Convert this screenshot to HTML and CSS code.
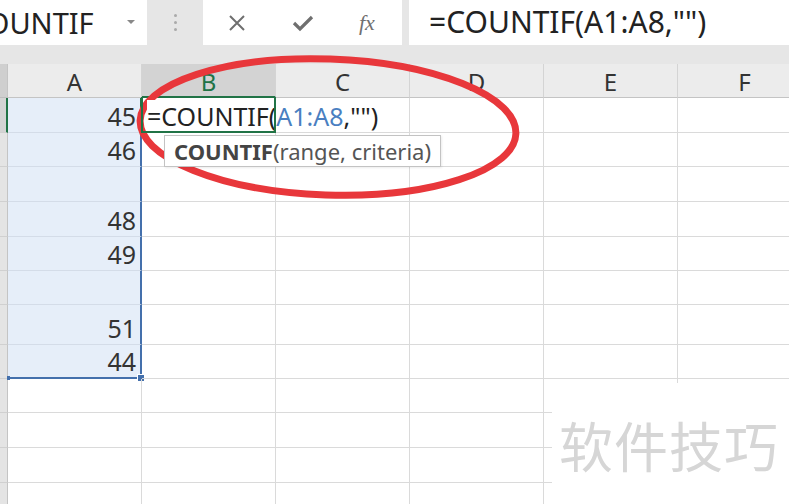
FILE: index.html
```html
<!DOCTYPE html>
<html lang="zh-CN">
<head>
    <meta charset="UTF-8">
    <title>COUNTIF</title>
    <link rel="stylesheet" href="styles.css">
</head>
<body>
    <div class="topbar">
        <div class="namebox">
            <span class="name">COUNTIF</span>
            <span class="caret"></span>
        </div>
        <div class="grip"><i></i><i></i><i></i></div>
        <div class="fx-tools">
            <svg class="ico" width="20" height="20" viewBox="0 0 20 20"><path d="M3 3 L17 17 M17 3 L3 17" stroke="#6f6f6f" stroke-width="2" fill="none"/></svg>
            <svg class="ico" width="22" height="20" viewBox="0 0 22 20"><path d="M2 10 L8 16 L20 4" stroke="#6f6f6f" stroke-width="3.2" fill="none"/></svg>
            <span class="fx">fx</span>
        </div>
        <div class="formula">=COUNTIF(A1:A8,"")</div>
    </div>

    <div class="sheet">
        <div class="row head">
            <div class="rh corner"></div>
            <div class="ch">A</div>
            <div class="ch active">B</div>
            <div class="ch">C</div>
            <div class="ch">D</div>
            <div class="ch">E</div>
            <div class="ch">F</div>
        </div>
        <div class="row h35">
            <div class="rh cur"></div>
            <div class="c sel first">45</div>
            <div class="c edit">
                <span class="edit-text">=COUNTIF(<span class="ref">A1:A8</span>,"")</span>
                <div class="tip"><b>COUNTIF</b>(range, criteria)</div>
            </div>
            <div class="c"></div><div class="c"></div><div class="c"></div><div class="c"></div>
        </div>
        <div class="row h34">
            <div class="rh"></div>
            <div class="c sel">46</div>
            <div class="c"></div><div class="c"></div><div class="c"></div><div class="c"></div><div class="c"></div>
        </div>
        <div class="row h35">
            <div class="rh"></div>
            <div class="c sel"></div>
            <div class="c"></div><div class="c"></div><div class="c"></div><div class="c"></div><div class="c"></div>
        </div>
        <div class="row h35">
            <div class="rh"></div>
            <div class="c sel">48</div>
            <div class="c"></div><div class="c"></div><div class="c"></div><div class="c"></div><div class="c"></div>
        </div>
        <div class="row h34">
            <div class="rh"></div>
            <div class="c sel">49</div>
            <div class="c"></div><div class="c"></div><div class="c"></div><div class="c"></div><div class="c"></div>
        </div>
        <div class="row h34">
            <div class="rh"></div>
            <div class="c sel"></div>
            <div class="c"></div><div class="c"></div><div class="c"></div><div class="c"></div><div class="c"></div>
        </div>
        <div class="row h40">
            <div class="rh"></div>
            <div class="c sel">51</div>
            <div class="c"></div><div class="c"></div><div class="c"></div><div class="c"></div><div class="c"></div>
        </div>
        <div class="row h34">
            <div class="rh"></div>
            <div class="c sel last">44<span class="handle"></span><span class="tick"></span></div>
            <div class="c"></div><div class="c"></div><div class="c"></div><div class="c"></div><div class="c"></div>
        </div>
        <div class="row h34">
            <div class="rh"></div>
            <div class="c"></div><div class="c"></div><div class="c"></div><div class="c"></div><div class="c"></div><div class="c"></div>
        </div>
        <div class="row h35">
            <div class="rh"></div>
            <div class="c"></div><div class="c"></div><div class="c"></div><div class="c"></div><div class="c"></div><div class="c"></div>
        </div>
        <div class="row h35">
            <div class="rh"></div>
            <div class="c"></div><div class="c"></div><div class="c"></div><div class="c"></div><div class="c"></div><div class="c"></div>
        </div>
        <div class="row h35">
            <div class="rh"></div>
            <div class="c"></div><div class="c"></div><div class="c"></div><div class="c"></div><div class="c"></div><div class="c"></div>
        </div>
    </div>

    <!-- watermark block over the bottom-right corner -->
    <div class="watermark">软件技巧</div>

    <!-- red annotation ring -->
    <svg class="ring" width="789" height="504" viewBox="0 0 789 504">
        <ellipse cx="328" cy="127" rx="188" ry="68" transform="rotate(2 328 127)" fill="none" stroke="#e8373b" stroke-width="7"/>
    </svg>
</body>
</html>
```

FILE: styles.css
```css
body {
    margin: 0;
    width: 789px;
    height: 504px;
    overflow: hidden;
    position: relative;
    background-color: #e6e6e6;
    font-family: 'Noto Sans', 'Noto Sans CJK SC', sans-serif;
    color: #333;
}
.topbar {
    display: flex;
    height: 45px;
    margin-bottom: 19px;
}
.namebox {
    width: 147px;
    background: white;
    display: flex;
    align-items: center;
    overflow: hidden;
    position: relative;
}
.name {
    font-size: 29px;
    color: #222;
    margin-left: -31px;
    white-space: nowrap;
}
.caret {
    position: absolute;
    left: 127px;
    top: 20px;
    border-left: 4px solid transparent;
    border-right: 4px solid transparent;
    border-top: 4px solid #888;
}
.grip {
    width: 56px;
    display: flex;
    flex-direction: column;
    align-items: center;
    justify-content: center;
    gap: 4px;
}
.grip i {
    width: 3px;
    height: 3px;
    background: #aaa;
    border-radius: 50%;
}
.fx-tools {
    width: 199px;
    background: white;
    display: flex;
    align-items: center;
    padding-left: 24px;
    gap: 45px;
    box-sizing: border-box;
}
.fx {
    font-family: 'Liberation Serif', serif;
    font-style: italic;
    font-size: 22px;
    color: #707070;
    margin-left: 0;
}
.formula {
    flex: 1;
    margin-left: 7px;
    background: white;
    font-size: 30px;
    color: #222;
    padding-left: 20px;
    line-height: 44px;
    white-space: nowrap;
}
.sheet {
    background: white;
}
.row {
    display: flex;
}
.h34 { height: 34px; }
.h35 { height: 35px; }
.h40 { height: 40px; }
.head {
    height: 34px;
    background: #ececec;
}
.rh {
    width: 8px;
    flex: none;
    background: #e4e4e4;
    border-right: 1px solid #c4c4c4;
    border-bottom: 1px solid #d0d0d0;
    box-sizing: border-box;
}
.rh.corner {
    background: #cfcfcf;
    border-bottom: 1px solid #bdbdbd;
}
.rh.cur {
    border-right: 2px solid #217346;
    background: #d4d4d4;
}
.ch {
    width: 134px;
    flex: none;
    box-sizing: border-box;
    border-right: 1px solid #d4d4d4;
    border-bottom: 1px solid #c4c4c4;
    text-align: center;
    font-size: 24px;
    line-height: 36px;
    color: #333;
}
.ch.active {
    background: #d3d3d3;
    color: #217346;
    border-bottom: 2px solid #217346;
}
.c {
    width: 134px;
    flex: none;
    box-sizing: border-box;
    border-right: 1px solid #dadada;
    border-bottom: 1px solid #dadada;
    display: flex;
    align-items: flex-end;
    justify-content: flex-end;
    padding: 0 4px 0 0;
    font-size: 25px;
    line-height: 32px;
    color: #333;
    position: relative;
}
.sel {
    background: #e6eef9;
    border-right: 2px solid #4470ac;
    border-bottom-color: #d4dce8;
}
.sel.first {
    border-right-color: #217346;
}
.sel.last {
    border-bottom: 2px solid #4470ac;
}
.handle {
    position: absolute;
    right: -5px;
    bottom: -5px;
    width: 6px;
    height: 6px;
    background: #4470ac;
    border: 1px solid white;
}
.tick {
    position: absolute;
    left: -1px;
    bottom: -3px;
    width: 3px;
    height: 4px;
    background: #4470ac;
}
.edit {
    justify-content: flex-start;
    padding-left: 5px;
    z-index: 2;
    overflow: visible;
    border-right: none;
}
.edit::after {
    content: '';
    position: absolute;
    left: -1px;
    top: -1px;
    right: 0;
    bottom: -1px;
    border: 2px solid #217346;
    border-top: none;
}
.edit-text {
    white-space: nowrap;
    background: white;
    padding-right: 10px;
    color: #222;
}
.ref {
    color: #4a7fc1;
}
.tip {
    position: absolute;
    left: 22px;
    top: 37px;
    height: 30px;
    padding: 0 9px;
    background: white;
    border: 1px solid #c3c3c3;
    box-shadow: 1px 1px 2px rgba(0,0,0,0.08);
    font-size: 22px;
    line-height: 30px;
    color: #555;
    white-space: nowrap;
    z-index: 3;
}
.tip b {
    color: #444;
}
.watermark {
    position: absolute;
    left: 552px;
    top: 383px;
    right: 0;
    bottom: 0;
    background: white;
    font-family: 'Noto Sans CJK SC', sans-serif;
    font-size: 54px;
    color: #d6d6d6;
    padding: 22px 0 0 7px;
    letter-spacing: 1px;
    box-sizing: border-box;
}
.ring {
    position: absolute;
    left: 0;
    top: 0;
    pointer-events: none;
}
```
